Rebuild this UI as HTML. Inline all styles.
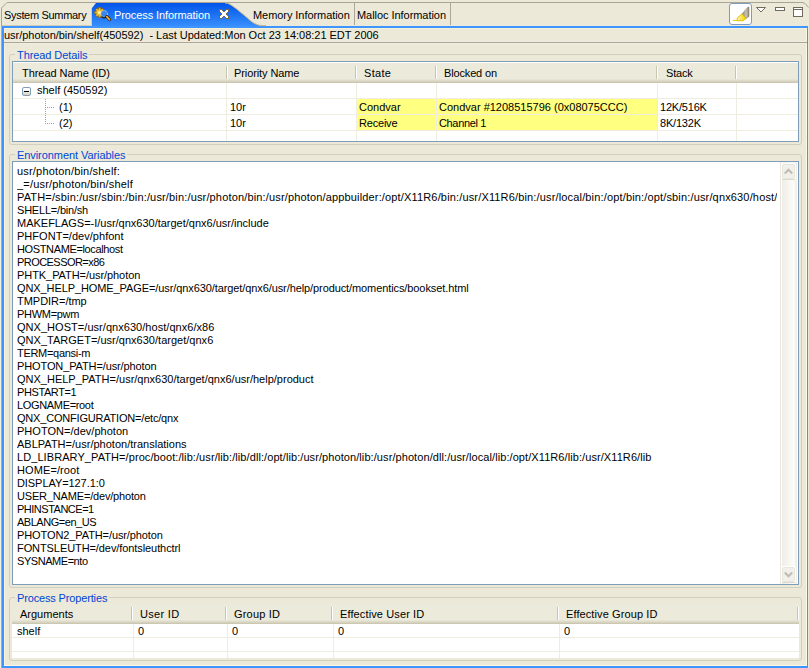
<!DOCTYPE html>
<html><head><meta charset="utf-8">
<style>
*{margin:0;padding:0;box-sizing:border-box}
html,body{width:809px;height:668px;overflow:hidden;background:#ECE9D8;font-family:"Liberation Sans",sans-serif;font-size:11px;color:#000}
.a{position:absolute}
.t{position:absolute;white-space:pre;line-height:13px}
.el{position:absolute;left:0;white-space:pre;line-height:13px}
.gb{position:absolute;border:1px solid #D0D0BF;border-radius:3px}
.gt{position:absolute;color:#0046D5;background:#ECE9D8;padding:0 2px;white-space:pre;line-height:13px}
.hs{position:absolute;width:2px;height:13px;border-left:1px solid #C7C5B2;border-right:1px solid #fff}
.gl{position:absolute;background:#EFEDE0}
.yl{position:absolute;background:#FFFF80}
.sh{position:absolute;height:4px;background:linear-gradient(#E6E4D5 0,#E6E4D5 25%,#DEDBCB 25%,#DEDBCB 50%,#D6D2C0 50%,#D6D2C0 75%,#CBC7B1 75%)}
</style></head><body>
<!-- tab bar outline -->
<svg class="a" style="left:0;top:0" width="809" height="30" viewBox="0 0 809 30">
 <path d="M1.5 30 L1.5 8 L7 2.5 L803 2.5 Q805.5 3 808.5 7.5" fill="none" stroke="#A8A597" stroke-width="1"/>
</svg>
<!-- System summary tab edges -->
<div class="a" style="left:91px;top:8px;width:1px;height:18px;background:#D3CDB6"></div>
<div class="a" style="left:2px;top:25px;width:90px;height:1px;background:#D3CDB6"></div>
<div class="t" style="left:4px;top:9px;letter-spacing:-0.32px">System Summary</div>

<!-- active tab -->
<svg class="a" style="left:90px;top:2px" width="176" height="26" viewBox="0 0 176 26">
 <defs><linearGradient id="bg1" x1="0" y1="0" x2="0" y2="1">
  <stop offset="0" stop-color="#0054E8"/><stop offset="1" stop-color="#3D93FF"/></linearGradient></defs>
 <path d="M2 26 L2 6 L6 1 L135 1 C139 1 141 3 146 6.5 L157.5 16 C161 19.5 164 21.8 169 23.2 L176 23.8 L176 26 Z" fill="url(#bg1)"/>
 <path d="M135 1 C139 1 141 3 146 6.5 L157.5 16 C161 19.5 164 21.8 169 23.2 L176 23.8" fill="none" stroke="#C8B98F" stroke-width="1"/>
</svg>
<!-- icon gear + magnifier -->
<svg class="a" style="left:94px;top:6px" width="18" height="16" viewBox="0 0 18 16">
 <g transform="translate(5.6 6.5)">
  <g fill="#F2C230" stroke="#8A5A00" stroke-width="0.7">
   <path d="M-1 -5 L1 -5 L1.2 -3.2 L2.8 -4 L4 -2.8 L3.2 -1.2 L5 -1 L5 1 L3.2 1.2 L4 2.8 L2.8 4 L1.2 3.2 L1 5 L-1 5 L-1.2 3.2 L-2.8 4 L-4 2.8 L-3.2 1.2 L-5 1 L-5 -1 L-3.2 -1.2 L-4 -2.8 L-2.8 -4 L-1.2 -3.2 Z"/>
  </g>
  <circle r="1.6" fill="#FFF3A0"/>
 </g>
 <circle cx="10.2" cy="8" r="3.4" fill="#3A84F0" stroke="#D8E4F0" stroke-width="1" stroke-dasharray="1 1"/>
 <path d="M7.5 10.6 A3.3 3.3 0 0 0 13 10" fill="none" stroke="#1A1A1A" stroke-width="1.2"/>
 <line x1="12.8" y1="10.6" x2="15.6" y2="13.6" stroke="#2A1A00" stroke-width="3" stroke-linecap="round"/>
 <line x1="12.8" y1="10.6" x2="15.6" y2="13.6" stroke="#F0B030" stroke-width="1.6" stroke-linecap="round"/>
</svg>
<div class="t" style="left:114px;top:9px;color:#fff;letter-spacing:-0.1px">Process Information</div>
<!-- close X -->
<svg class="a" style="left:219px;top:9px" width="10" height="10" viewBox="0 0 10 10" shape-rendering="crispEdges"><rect x="0" y="0" width="3" height="1" fill="#7B6A50"/><rect x="7" y="0" width="3" height="1" fill="#7B6A50"/><rect x="0" y="1" width="1" height="1" fill="#7B6A50"/><rect x="1" y="1" width="2" height="1" fill="#fff"/><rect x="3" y="1" width="1" height="1" fill="#7B6A50"/><rect x="6" y="1" width="1" height="1" fill="#7B6A50"/><rect x="7" y="1" width="2" height="1" fill="#fff"/><rect x="9" y="1" width="1" height="1" fill="#7B6A50"/><rect x="0" y="2" width="1" height="1" fill="#7B6A50"/><rect x="1" y="2" width="3" height="1" fill="#fff"/><rect x="4" y="2" width="2" height="1" fill="#7B6A50"/><rect x="6" y="2" width="3" height="1" fill="#fff"/><rect x="9" y="2" width="1" height="1" fill="#7B6A50"/><rect x="1" y="3" width="1" height="1" fill="#7B6A50"/><rect x="2" y="3" width="6" height="1" fill="#fff"/><rect x="8" y="3" width="1" height="1" fill="#7B6A50"/><rect x="2" y="4" width="1" height="1" fill="#7B6A50"/><rect x="3" y="4" width="4" height="1" fill="#fff"/><rect x="7" y="4" width="1" height="1" fill="#7B6A50"/><rect x="2" y="5" width="1" height="1" fill="#7B6A50"/><rect x="3" y="5" width="4" height="1" fill="#fff"/><rect x="7" y="5" width="1" height="1" fill="#7B6A50"/><rect x="1" y="6" width="1" height="1" fill="#7B6A50"/><rect x="2" y="6" width="6" height="1" fill="#fff"/><rect x="8" y="6" width="1" height="1" fill="#7B6A50"/><rect x="0" y="7" width="1" height="1" fill="#7B6A50"/><rect x="1" y="7" width="3" height="1" fill="#fff"/><rect x="4" y="7" width="2" height="1" fill="#7B6A50"/><rect x="6" y="7" width="3" height="1" fill="#fff"/><rect x="9" y="7" width="1" height="1" fill="#7B6A50"/><rect x="0" y="8" width="1" height="1" fill="#7B6A50"/><rect x="1" y="8" width="2" height="1" fill="#fff"/><rect x="3" y="8" width="1" height="1" fill="#7B6A50"/><rect x="6" y="8" width="1" height="1" fill="#7B6A50"/><rect x="7" y="8" width="2" height="1" fill="#fff"/><rect x="9" y="8" width="1" height="1" fill="#7B6A50"/><rect x="0" y="9" width="3" height="1" fill="#7B6A50"/><rect x="7" y="9" width="3" height="1" fill="#7B6A50"/></svg>

<div class="t" style="left:253px;top:9px;letter-spacing:-0.06px">Memory Information</div>
<div class="a" style="left:354px;top:3px;width:1px;height:22px;background:#ACA899"></div>
<div class="t" style="left:357px;top:9px;letter-spacing:-0.05px">Malloc Information</div>
<div class="a" style="left:450px;top:3px;width:1px;height:22px;background:#ACA899"></div>

<!-- right toolbar -->
<div class="a" style="left:729px;top:3px;width:23px;height:22px;border:1px solid #7F9DB9;border-radius:3px;background:#fff"></div>
<svg class="a" style="left:732px;top:6px" width="18" height="16" viewBox="0 0 18 16">
 <defs><linearGradient id="gy" x1="0" y1="0" x2="1" y2="0"><stop offset="0" stop-color="#8E8870"/><stop offset="0.6" stop-color="#C8C4B0"/><stop offset="1" stop-color="#8A846C"/></linearGradient>
 <linearGradient id="yy" x1="0" y1="0" x2="1" y2="0"><stop offset="0" stop-color="#FFF4A0"/><stop offset="1" stop-color="#F5D000"/></linearGradient></defs>
 <path d="M10 8 L15.5 1.5 L17 1 L17 10.5 L14 12.5 Z" fill="url(#gy)" stroke="#8A846C" stroke-width="0.6"/>
 <path d="M10 8 L14 12.5 L11 14.8 L5.2 14.8 L5.2 12 Z" fill="url(#yy)" stroke="#E2B800" stroke-width="0.9"/>
 <line x1="1" y1="14.5" x2="5" y2="14.5" stroke="#F0C800" stroke-width="1"/>
</svg>
<svg class="a" style="left:752px;top:3px" width="56" height="18" viewBox="0 0 56 18" shape-rendering="crispEdges">
 <path d="M4.5 4.5 L13.5 4.5 L9 9 Z" fill="#fff" stroke="#6E6A5D" stroke-width="1" shape-rendering="auto"/>
 <rect x="23.5" y="4.5" width="9" height="3" fill="#fff" stroke="#6E6A5D" stroke-width="1"/>
 <rect x="41.5" y="4.5" width="9" height="9" fill="#fff" stroke="#6E6A5D" stroke-width="1"/>
 <line x1="41" y1="6.5" x2="51" y2="6.5" stroke="#6E6A5D" stroke-width="1"/>
</svg>
<!-- blue frame -->
<div class="a" style="left:2px;top:26px;width:806px;height:642px;border:2px solid #3D95FF;border-bottom:none"></div>
<div class="a" style="left:2px;top:666px;width:806px;height:2px;background:#3D95FF"></div>
<div class="a" style="left:4px;top:28px;width:803px;height:638px;border-left:1px solid #F8F0D8;border-top:1px solid #F8F0D8;border-right:1px solid #FFF8E8;border-bottom:1px solid #FFF8E8"></div>
<div class="a" style="left:0;top:26px;width:1px;height:642px;background:#F3F0E4"></div>
<div class="a" style="left:1px;top:26px;width:1px;height:642px;background:#B9A98A"></div>

<div class="t" style="left:4px;top:29px;letter-spacing:-0.025px">usr/photon/bin/shelf(450592)  - Last Updated:Mon Oct 23 14:08:21 EDT 2006</div>
<div class="a" style="left:4px;top:41px;width:803px;height:3px;background:linear-gradient(#F1EEE1 0,#F1EEE1 1px,#A9A698 1px,#A9A698 2px,#F1EEE1 2px)"></div>
<!-- Thread Details group -->
<div class="gb" style="left:9px;top:54px;width:793px;height:91px"></div>
<div class="gt" style="left:15px;top:49px;letter-spacing:-0.08px">Thread Details</div>
<div class="a" style="left:12px;top:61px;width:787px;height:81px;border:1px solid #7F9DB9;background:#fff"></div>
<div class="a" style="left:13px;top:63px;width:785px;height:16px;background:#EBEADB"></div>
<div class="sh" style="left:13px;top:79px;width:785px"></div>
<div class="hs" style="left:226px;top:66px"></div>
<div class="hs" style="left:355px;top:66px"></div>
<div class="hs" style="left:435px;top:66px"></div>
<div class="hs" style="left:656px;top:66px"></div>
<div class="hs" style="left:735px;top:66px"></div>
<div class="t" style="left:22px;top:67px;letter-spacing:-0.05px">Thread Name (ID)</div>
<div class="t" style="left:234px;top:67px;letter-spacing:-0.1px">Priority Name</div>
<div class="t" style="left:364px;top:67px;letter-spacing:0.3px">State</div>
<div class="t" style="left:444px;top:67px;letter-spacing:-0.15px">Blocked on</div>
<div class="t" style="left:666px;top:67px;letter-spacing:-0.2px">Stack</div>
<!-- body grid -->
<div class="yl" style="left:357px;top:99px;width:300px;height:31px"></div>
<div class="gl" style="left:13px;top:98px;width:785px;height:1px"></div>
<div class="gl" style="left:13px;top:114px;width:785px;height:1px"></div>
<div class="gl" style="left:13px;top:130px;width:785px;height:1px"></div>
<div class="gl" style="left:226px;top:83px;width:1px;height:58px"></div>
<div class="gl" style="left:356px;top:83px;width:1px;height:58px"></div>
<div class="gl" style="left:436px;top:83px;width:1px;height:58px"></div>
<div class="gl" style="left:657px;top:83px;width:1px;height:58px"></div>
<div class="gl" style="left:736px;top:83px;width:1px;height:58px"></div>
<!-- tree -->
<div class="a" style="left:22px;top:87px;width:9px;height:9px;border:1px solid #7F9DB9;border-radius:2px;background:linear-gradient(#fff 20%,#D8D0B8)"></div>
<div class="a" style="left:24px;top:91px;width:5px;height:1px;background:#000"></div>
<div class="a" style="left:45px;top:99px;width:1px;height:25px;background:repeating-linear-gradient(#A0A0A0 0 1px,transparent 1px 2px)"></div>
<div class="a" style="left:47px;top:107px;width:8px;height:1px;background:repeating-linear-gradient(90deg,#A0A0A0 0 1px,transparent 1px 2px)"></div>
<div class="a" style="left:47px;top:123px;width:8px;height:1px;background:repeating-linear-gradient(90deg,#A0A0A0 0 1px,transparent 1px 2px)"></div>
<div class="t" style="left:37px;top:84px">shelf (450592)</div>
<div class="t" style="left:59px;top:101px">(1)</div>
<div class="t" style="left:59px;top:117px">(2)</div>
<div class="t" style="left:230px;top:101px">10r</div>
<div class="t" style="left:230px;top:117px">10r</div>
<div class="t" style="left:359px;top:101px">Condvar</div>
<div class="t" style="left:359px;top:117px;letter-spacing:-0.2px">Receive</div>
<div class="t" style="left:439px;top:101px">Condvar #1208515796 (0x08075CCC)</div>
<div class="t" style="left:439px;top:117px;letter-spacing:-0.35px">Channel 1</div>
<div class="t" style="left:660px;top:101px;letter-spacing:-0.2px">12K/516K</div>
<div class="t" style="left:660px;top:117px;letter-spacing:-0.2px">8K/132K</div>

<!-- Environment group -->
<div class="gb" style="left:9px;top:154px;width:793px;height:434px"></div>
<div class="gt" style="left:15px;top:149px;letter-spacing:-0.07px">Environment Variables</div>
<div class="a" style="left:12px;top:161px;width:787px;height:424px;border:1px solid #7F9DB9;background:#fff"></div>
<div class="a" style="left:17px;top:165px;width:760px;height:410px;overflow:hidden">
<div class="el" style="top:0px;letter-spacing:0.190px">usr/photon/bin/shelf:</div>
<div class="el" style="top:13px;letter-spacing:0.191px">_=/usr/photon/bin/shelf</div>
<div class="el" style="top:26px;letter-spacing:0.156px">PATH=/sbin:/usr/sbin:/bin:/usr/bin:/usr/photon/bin:/usr/photon/appbuilder:/opt/X11R6/bin:/usr/X11R6/bin:/usr/local/bin:/opt/bin:/opt/sbin:/usr/qnx630/host/qnx6/x86/usr/bin</div>
<div class="el" style="top:39px;letter-spacing:-0.208px">SHELL=/bin/sh</div>
<div class="el" style="top:52px;letter-spacing:-0.009px">MAKEFLAGS=-I/usr/qnx630/target/qnx6/usr/include</div>
<div class="el" style="top:65px;letter-spacing:0.029px">PHFONT=/dev/phfont</div>
<div class="el" style="top:78px;letter-spacing:-0.365px">HOSTNAME=localhost</div>
<div class="el" style="top:91px;letter-spacing:-0.550px">PROCESSOR=x86</div>
<div class="el" style="top:104px;letter-spacing:-0.065px">PHTK_PATH=/usr/photon</div>
<div class="el" style="top:117px;letter-spacing:-0.094px">QNX_HELP_HOME_PAGE=/usr/qnx630/target/qnx6/usr/help/product/momentics/bookset.html</div>
<div class="el" style="top:130px;letter-spacing:-0.030px">TMPDIR=/tmp</div>
<div class="el" style="top:143px;letter-spacing:-0.300px">PHWM=pwm</div>
<div class="el" style="top:156px;letter-spacing:0.042px">QNX_HOST=/usr/qnx630/host/qnx6/x86</div>
<div class="el" style="top:169px;letter-spacing:0.015px">QNX_TARGET=/usr/qnx630/target/qnx6</div>
<div class="el" style="top:182px;letter-spacing:-0.300px">TERM=qansi-m</div>
<div class="el" style="top:195px;letter-spacing:-0.114px">PHOTON_PATH=/usr/photon</div>
<div class="el" style="top:208px;letter-spacing:0.002px">QNX_HELP_PATH=/usr/qnx630/target/qnx6/usr/help/product</div>
<div class="el" style="top:221px;letter-spacing:-0.400px">PHSTART=1</div>
<div class="el" style="top:234px;letter-spacing:-0.336px">LOGNAME=root</div>
<div class="el" style="top:247px;letter-spacing:-0.196px">QNX_CONFIGURATION=/etc/qnx</div>
<div class="el" style="top:260px;letter-spacing:0.024px">PHOTON=/dev/photon</div>
<div class="el" style="top:273px;letter-spacing:0.010px">ABLPATH=/usr/photon/translations</div>
<div class="el" style="top:286px;letter-spacing:0.081px">LD_LIBRARY_PATH=/proc/boot:/lib:/usr/lib:/lib/dll:/opt/lib:/usr/photon/lib:/usr/photon/dll:/usr/local/lib:/opt/X11R6/lib:/usr/X11R6/lib</div>
<div class="el" style="top:299px;letter-spacing:0.100px">HOME=/root</div>
<div class="el" style="top:312px;letter-spacing:-0.071px">DISPLAY=127.1:0</div>
<div class="el" style="top:325px;letter-spacing:-0.175px">USER_NAME=/dev/photon</div>
<div class="el" style="top:338px;letter-spacing:-0.491px">PHINSTANCE=1</div>
<div class="el" style="top:351px;letter-spacing:-0.473px">ABLANG=en_US</div>
<div class="el" style="top:364px;letter-spacing:-0.100px">PHOTON2_PATH=/usr/photon</div>
<div class="el" style="top:377px;letter-spacing:-0.083px">FONTSLEUTH=/dev/fontsleuthctrl</div>
<div class="el" style="top:390px;letter-spacing:-0.450px">SYSNAME=nto</div></div>
<!-- scrollbar -->
<div class="a" style="left:780px;top:162px;width:18px;height:422px;background:linear-gradient(90deg,#E9E7DE 0,#E9E7DE 1px,#fff 1px,#fff 2px,#EFEDE6 2px,#FCFCFA 14px,#EFEEE8 16px,#EFEEE8 17px,#fff 17px)"></div>
<div class="a" style="left:781px;top:163px;width:15px;height:17px;background:#fff;border-radius:2px"></div>
<div class="a" style="left:782px;top:164px;width:13px;height:15px;border:1px solid #E8E6DC;border-radius:2px;background:#F1F0EA"></div>
<div class="a" style="left:782px;top:179px;width:13px;height:1px;background:#DCDBCB"></div>
<svg class="a" style="left:783px;top:167px" width="11" height="9"><path d="M1.8 6.5 L5.5 2.8 L9.2 6.5" fill="none" stroke="#BFBEB2" stroke-width="2.2"/></svg>
<div class="a" style="left:781px;top:566px;width:15px;height:17px;background:#fff;border-radius:2px"></div>
<div class="a" style="left:782px;top:567px;width:13px;height:15px;border:1px solid #E8E6DC;border-radius:2px;background:#F1F0EA"></div>
<div class="a" style="left:782px;top:582px;width:13px;height:1px;background:#DCDBCB"></div>
<svg class="a" style="left:783px;top:570px" width="11" height="9"><path d="M1.8 2.5 L5.5 6.2 L9.2 2.5" fill="none" stroke="#BFBEB2" stroke-width="2.2"/></svg>

<!-- Process Properties group -->
<div class="gb" style="left:9px;top:597px;width:793px;height:64px"></div>
<div class="gt" style="left:15px;top:592px;letter-spacing:-0.15px">Process Properties</div>
<div class="a" style="left:12px;top:604px;width:787px;height:16px;background:#EBEADB"></div>
<div class="sh" style="left:12px;top:620px;width:787px"></div>
<div class="a" style="left:12px;top:624px;width:787px;height:34px;background:#fff"></div>
<div class="hs" style="left:131px;top:607px"></div>
<div class="hs" style="left:225px;top:607px"></div>
<div class="hs" style="left:331px;top:607px"></div>
<div class="hs" style="left:557px;top:607px"></div>
<div class="hs" style="left:797px;top:607px"></div>
<div class="t" style="left:20px;top:608px">Arguments</div>
<div class="t" style="left:140px;top:608px;letter-spacing:0.3px">User ID</div>
<div class="t" style="left:234px;top:608px;letter-spacing:0.2px">Group ID</div>
<div class="t" style="left:340px;top:608px;letter-spacing:0.12px">Effective User ID</div>
<div class="t" style="left:566px;top:608px;letter-spacing:0.1px">Effective Group ID</div>
<div class="gl" style="left:12px;top:637px;width:787px;height:1px"></div>
<div class="gl" style="left:12px;top:651px;width:787px;height:1px"></div>
<div class="gl" style="left:133px;top:624px;width:1px;height:34px"></div>
<div class="gl" style="left:227px;top:624px;width:1px;height:34px"></div>
<div class="gl" style="left:333px;top:624px;width:1px;height:34px"></div>
<div class="gl" style="left:559px;top:624px;width:1px;height:34px"></div>
<div class="t" style="left:17px;top:625px">shelf</div>
<div class="t" style="left:138px;top:625px">0</div>
<div class="t" style="left:232px;top:625px">0</div>
<div class="t" style="left:338px;top:625px">0</div>
<div class="t" style="left:564px;top:625px">0</div>

</body></html>
